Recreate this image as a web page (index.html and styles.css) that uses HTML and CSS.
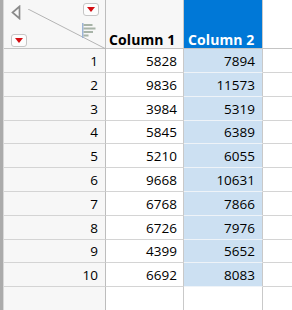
FILE: index.html
```html
<!DOCTYPE html>
<html lang="en">
<head>
    <meta charset="UTF-8">
    <title>Data Table</title>
    <link rel="stylesheet" href="styles.css">
</head>
<body>
    <div class="window">
        <div class="side-strip"></div>
        <div class="table-area">
            <div class="top-band">
                <div class="band-left"></div>
                <div class="band-right"></div>
            </div>

            <div class="grid">
                <!-- Header row -->
                <div class="cell corner">
                    <svg class="back-arrow" width="11" height="15" viewBox="0 0 11 15">
                        <polygon points="8.5,1.5 1.5,7.5 8.5,13.5" fill="none" stroke="#8a8a8a" stroke-width="1.7"/>
                    </svg>
                    <svg class="diagonal" width="78" height="40" viewBox="0 0 78 40">
                        <line x1="0" y1="0" x2="78" y2="40" stroke="#b4b4b4" stroke-width="1"/>
                    </svg>
                    <span class="menu-btn menu-top"><span class="red-tri"></span></span>
                    <span class="menu-btn menu-bottom"><span class="red-tri"></span></span>
                    <svg class="bars-icon" width="15" height="15" viewBox="0 0 15 15">
                        <rect x="0" y="0" width="1.5" height="15" fill="#9cb4d8"/>
                        <rect x="1.5" y="1" width="9" height="2" fill="#a8b4a8"/>
                        <rect x="1.5" y="4.5" width="12" height="2" fill="#a8b4a8"/>
                        <rect x="1.5" y="8" width="9.5" height="2" fill="#a8b4a8"/>
                        <rect x="1.5" y="11.5" width="5" height="2" fill="#a8b4a8"/>
                    </svg>
                </div>
                <div class="cell col-head">Column 1</div>
                <div class="cell col-head selected">Column 2</div>
                <div class="cell filler head-fill"></div>

                <div class="cell row-num">1</div><div class="cell num">5828</div><div class="cell num sel">7894</div><div class="cell filler"></div>
                <div class="cell row-num">2</div><div class="cell num">9836</div><div class="cell num sel">11573</div><div class="cell filler"></div>
                <div class="cell row-num">3</div><div class="cell num">3984</div><div class="cell num sel">5319</div><div class="cell filler"></div>
                <div class="cell row-num">4</div><div class="cell num">5845</div><div class="cell num sel">6389</div><div class="cell filler"></div>
                <div class="cell row-num">5</div><div class="cell num">5210</div><div class="cell num sel">6055</div><div class="cell filler"></div>
                <div class="cell row-num">6</div><div class="cell num">9668</div><div class="cell num sel">10631</div><div class="cell filler"></div>
                <div class="cell row-num">7</div><div class="cell num">6768</div><div class="cell num sel">7866</div><div class="cell filler"></div>
                <div class="cell row-num">8</div><div class="cell num">6726</div><div class="cell num sel">7976</div><div class="cell filler"></div>
                <div class="cell row-num">9</div><div class="cell num">4399</div><div class="cell num sel">5652</div><div class="cell filler"></div>
                <div class="cell row-num">10</div><div class="cell num">6692</div><div class="cell num sel">8083</div><div class="cell filler"></div>

                <!-- Empty row -->
                <div class="cell row-num"></div><div class="cell num"></div><div class="cell num"></div><div class="cell filler"></div>
            </div>
        </div>
    </div>
</body>
</html>
```

FILE: styles.css
```css
* {
    margin: 0;
    padding: 0;
    box-sizing: border-box;
}
body {
    font-family: 'Open Sans', 'Noto Sans', sans-serif;
    background: #ffffff;
    color: #000;
    width: 292px;
    height: 310px;
    overflow: hidden;
}
.window {
    display: flex;
    height: 310px;
}
.side-strip {
    width: 4px;
    background: #ababab;
    border-right: 1px solid #d8d8d8;
    flex-shrink: 0;
}
.table-area {
    flex: 1;
    display: flex;
    flex-direction: column;
}
.top-band {
    display: flex;
    height: 3px;
}
.band-left {
    width: 102px;
    background: #d2d2d2;
}
.band-right {
    flex: 1;
    background: #8c8c8c;
}
.grid {
    display: grid;
    grid-template-columns: 102px 78px 79px 1fr;
    grid-template-rows: 49px 24px 24px 24px 23px 24px 24px 24px 24px 23px 24px 24px;
}
.cell {
    border-right: 1px solid #c9c9c9;
    border-bottom: 1px solid #d4d4d4;
    font-size: 13.5px;
    display: flex;
    align-items: center;
    justify-content: flex-end;
    white-space: nowrap;
}
.corner {
    position: relative;
    background: #f7f7f7;
    border-right-color: #bdbdbd;
    border-bottom-color: #c4c4c4;
}
.back-arrow {
    position: absolute;
    left: 7px;
    top: 5px;
}
.diagonal {
    position: absolute;
    left: 24px;
    top: 9px;
}
.menu-btn {
    position: absolute;
    width: 16px;
    height: 13px;
    background: #fdfdfd;
    border: 1px solid #c6c6c6;
    border-radius: 3px;
    display: flex;
    align-items: center;
    justify-content: center;
}
.menu-top {
    left: 79px;
    top: 3px;
}
.menu-bottom {
    left: 7px;
    top: 34px;
}
.red-tri {
    width: 0;
    height: 0;
    border-left: 4px solid transparent;
    border-right: 4px solid transparent;
    border-top: 5px solid #d40d12;
}
.bars-icon {
    position: absolute;
    left: 78px;
    top: 23px;
}
.col-head {
    background: #f7f7f7;
    font-weight: 700;
    font-size: 14px;
    line-height: 16px;
    justify-content: flex-start;
    align-items: flex-end;
    padding: 0 0 0 3px;
    border-bottom-color: #c4c4c4;
    letter-spacing: 0.1px;
}
.col-head.selected {
    background: #0078d7;
    color: #fff;
    padding-left: 4px;
}
.head-fill {
    background: #ffffff;
    border-bottom-color: #c4c4c4;
}
.row-num {
    background: #f7f7f7;
    border-right-color: #bdbdbd;
    padding-right: 7px;
}
.num {
    padding-right: 6px;
}
.sel {
    background: #cce0f2;
    border-bottom-color: #eef3f8;
    padding-right: 7px;
}
.filler {
    border-right: none;
}
```
